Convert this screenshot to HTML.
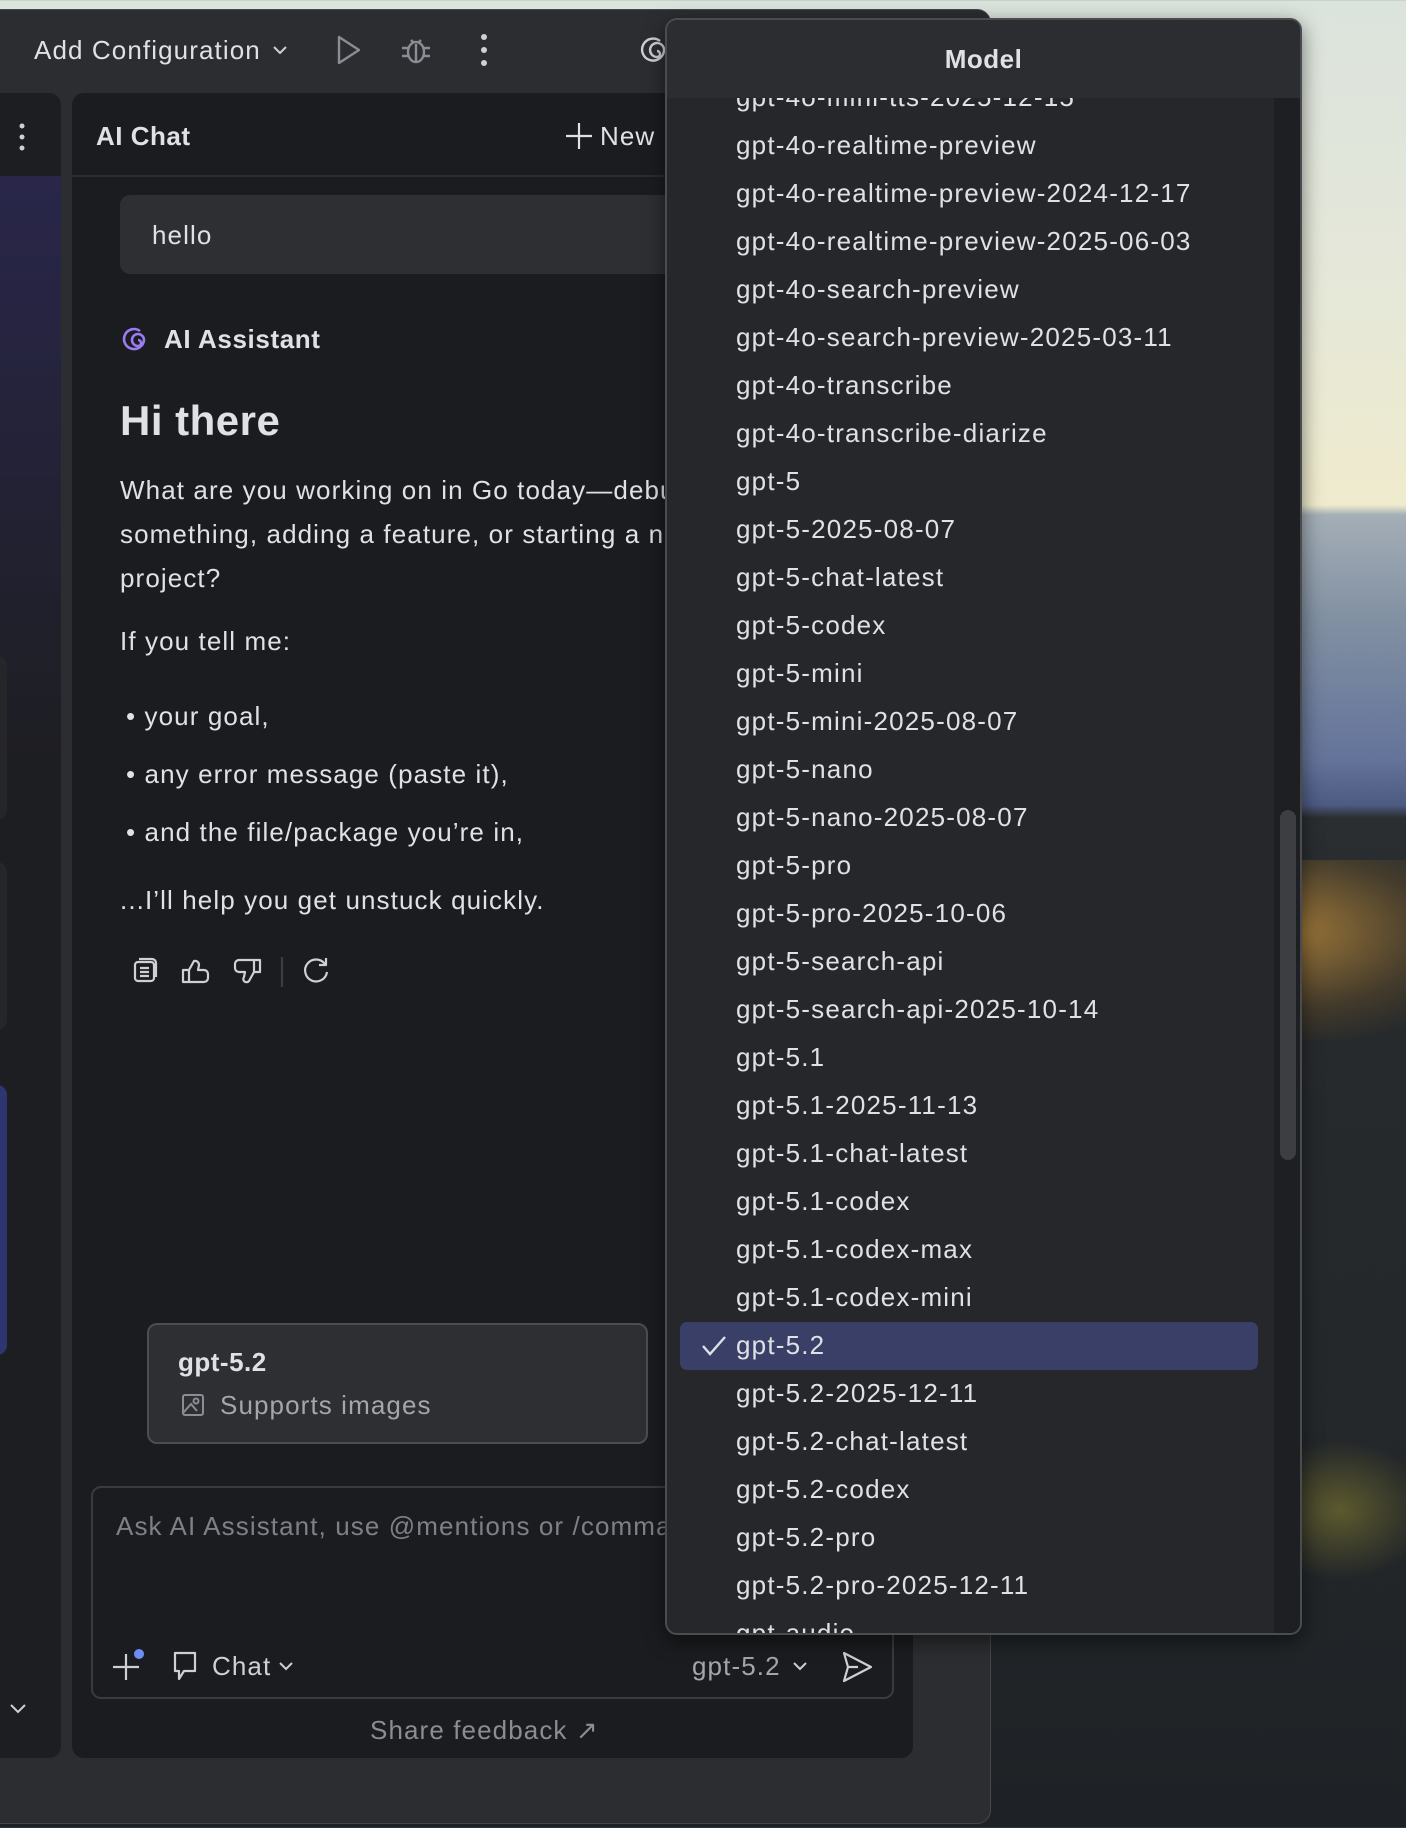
<!DOCTYPE html>
<html><head><meta charset="utf-8"><style>
*{margin:0;padding:0;box-sizing:border-box}
body{width:1406px;height:1828px;overflow:hidden;position:relative;font-family:"Liberation Sans",sans-serif;color:#dfe1e5;
background:linear-gradient(180deg,#dbe3dd 0px,#e6e8d8 300px,#efebcd 505px,#a4aeb6 515px,#8190a2 620px,#64739a 760px,#4d5a82 805px,#2a2e30 818px,#272a2c 1000px,#24282a 1400px,#1e2226 1828px)}
.abs{position:absolute}
.t{position:absolute;white-space:nowrap;font-size:26px;letter-spacing:1.1px;line-height:30px}
</style></head><body>
<div class="abs" style="left:1080px;top:860px;width:340px;height:180px;background:radial-gradient(ellipse at 60% 40%,rgba(190,140,60,.8),rgba(120,90,40,.35) 50%,rgba(0,0,0,0) 75%)"></div>
<div class="abs" style="left:1250px;top:1440px;width:180px;height:140px;background:radial-gradient(ellipse,rgba(150,140,50,.5),rgba(0,0,0,0) 70%)"></div>
<div class="abs" style="left:990px;top:1480px;width:200px;height:150px;background:radial-gradient(ellipse,rgba(120,110,50,.4),rgba(0,0,0,0) 70%)"></div>

<div class="abs" style="left:-20px;top:9px;width:1011px;height:1815px;background:#2b2d30;border-radius:14px;border:1px solid #45474b"></div>
<div class="t" style="left:34px;top:35px">Add Configuration</div>
<svg class="abs" style="left:272px;top:44px" width="16" height="12"><path d="M2 3l6 6 6-6" stroke="#ced0d6" stroke-width="2" fill="none"/></svg>
<svg class="abs" style="left:334px;top:34px" width="28" height="32"><path d="M5 3v26l20-13z" stroke="#8a8d93" stroke-width="2.4" fill="none" stroke-linejoin="round"/></svg>
<svg class="abs" style="left:400px;top:34px" width="32" height="32"><ellipse cx="16" cy="18" rx="8" ry="10" stroke="#8a8d93" stroke-width="2.4" fill="none"/><path d="M8 14H2M8 22H2M24 14h6M24 22h6M11 6l3 3M21 6l-3 3M16 10v18" stroke="#8a8d93" stroke-width="2.4"/></svg>
<svg class="abs" style="left:476px;top:32px" width="16" height="36"><circle cx="8" cy="5" r="3" fill="#ced0d6"/><circle cx="8" cy="18" r="3" fill="#ced0d6"/><circle cx="8" cy="31" r="3" fill="#ced0d6"/></svg>
<svg class="abs" style="left:640px;top:33px" width="30" height="32"><path d="M20 8a11 11 0 1 0 4 10 7 7 0 1 0-7 6 3 3 0 1 0 0-6" stroke="#ced0d6" stroke-width="2.4" fill="none"/></svg>

<div class="abs" style="left:-20px;top:93px;width:81px;height:1665px;background:#1d1e21;border-radius:12px;overflow:hidden">
 <div class="abs" style="left:0;top:83px;width:81px;height:600px;background:linear-gradient(180deg,#29264a,#1d1e21)"></div>
 <div class="abs" style="left:0;top:563px;width:27px;height:164px;background:#25262a;border-radius:10px"></div>
 <div class="abs" style="left:0;top:769px;width:27px;height:168px;background:#25262a;border-radius:10px"></div>
 <div class="abs" style="left:0;top:992px;width:27px;height:270px;background:#2e3570;border-radius:10px"></div>
</div>
<svg class="abs" style="left:17px;top:122px" width="10" height="30"><circle cx="5" cy="4" r="2.5" fill="#ced0d6"/><circle cx="5" cy="15" r="2.5" fill="#ced0d6"/><circle cx="5" cy="26" r="2.5" fill="#ced0d6"/></svg>
<svg class="abs" style="left:9px;top:1703px" width="18" height="12"><path d="M2 2l7 7 7-7" stroke="#ced0d6" stroke-width="2" fill="none"/></svg>

<div class="abs" style="left:72px;top:93px;width:841px;height:1665px;background:#1b1c1f;border-radius:12px"></div>
<div class="abs" style="left:72px;top:175px;width:841px;height:2px;background:#2a2c30"></div>
<div class="t" style="left:96px;top:121px;font-weight:bold;letter-spacing:0.5px">AI Chat</div>
<svg class="abs" style="left:565px;top:122px" width="28" height="28"><path d="M14 1v26M1 14h26" stroke="#dfe1e5" stroke-width="2.2"/></svg>
<div class="t" style="left:600px;top:121px">New</div>

<div class="abs" style="left:120px;top:195px;width:700px;height:79px;background:#2d2f33;border-radius:10px"></div>
<div class="t" style="left:152px;top:220px">hello</div>

<svg class="abs" style="left:122px;top:325px" width="28" height="30"><path d="M18 6a10 10 0 1 0 4 9 6 6 0 1 0-6 6 3 3 0 1 0 0-6" stroke="#9a7bf0" stroke-width="2.6" fill="none"/></svg>
<div class="t" style="left:164px;top:324px;font-weight:bold;letter-spacing:0.6px">AI Assistant</div>
<div class="t" style="left:120px;top:399px;font-size:42px;font-weight:bold;letter-spacing:0.5px;line-height:44px">Hi there</div>
<div class="t" style="left:120px;top:475px">What are you working on in Go today—debugging</div>
<div class="t" style="left:120px;top:519px">something, adding a feature, or starting a new</div>
<div class="t" style="left:120px;top:563px">project?</div>
<div class="t" style="left:120px;top:626px">If you tell me:</div>
<div class="t" style="left:126px;top:701px">• your goal,</div>
<div class="t" style="left:126px;top:759px">• any error message (paste it),</div>
<div class="t" style="left:126px;top:817px">• and the file/package you’re in,</div>
<div class="t" style="left:120px;top:885px">...I’ll help you get unstuck quickly.</div>

<svg class="abs" style="left:130px;top:955px" width="220" height="34" fill="none" stroke="#ced0d6" stroke-width="2.2" stroke-linejoin="round">
 <rect x="5" y="7" width="19" height="19" rx="3"/><path d="M9 4h13a4 4 0 0 1 4 4v14M10 13h9M10 17h9M10 21h9"/>
 <path d="M59 27V15M59 15h-6v12h6h15a4 4 0 0 0 4-4v-4a4 4 0 0 0-4-4h-6l1-5a4 4 0 0 0-5-4l-5 9"/>
 <path d="M124 5v12M124 5h-15a4 4 0 0 0-4 4v4a4 4 0 0 0 4 4h6l-1 5a3 3 0 0 0 5 4l5-9M124 5h6v12h-6"/>
 <path d="M152 2v30" stroke="#3a3c40"/>
 <path d="M195 9a11 11 0 1 0 2 8M196 3v7h-7"/>
</svg>

<div class="abs" style="left:147px;top:1323px;width:501px;height:121px;background:#2d2f33;border:2px solid #4b4d52;border-radius:10px"></div>
<div class="t" style="left:178px;top:1347px;font-weight:bold;letter-spacing:0.5px">gpt-5.2</div>
<svg class="abs" style="left:181px;top:1393px" width="24" height="24" fill="none" stroke="#8a8d93" stroke-width="2"><rect x="2" y="2" width="20" height="20" rx="2"/><circle cx="15" cy="8" r="2.5"/><path d="M2 20l8-9 6 7"/></svg>
<div class="t" style="left:220px;top:1390px;color:#a3a6ab">Supports images</div>

<div class="abs" style="left:91px;top:1486px;width:803px;height:213px;border:2px solid #393b40;border-radius:10px;background:#1b1c1f"></div>
<div class="t" style="left:116px;top:1511px;color:#7d8087">Ask AI Assistant, use @mentions or /commands</div>
<svg class="abs" style="left:112px;top:1648px" width="36" height="36"><path d="M14 6v26M1 19h26" stroke="#ced0d6" stroke-width="2.2"/><circle cx="27" cy="6" r="5" fill="#6f8cf5"/></svg>
<svg class="abs" style="left:172px;top:1650px" width="26" height="34" fill="none" stroke="#ced0d6" stroke-width="2.2" stroke-linejoin="round"><path d="M3 3h20v18H12l-5 8v-8H3z"/></svg>
<div class="t" style="left:212px;top:1651px;color:#ced0d6">Chat</div>
<svg class="abs" style="left:278px;top:1660px" width="16" height="12"><path d="M2 3l6 6 6-6" stroke="#ced0d6" stroke-width="2" fill="none"/></svg>
<div class="t" style="left:692px;top:1651px;color:#a3a6ab">gpt-5.2</div>
<svg class="abs" style="left:792px;top:1660px" width="16" height="12"><path d="M2 3l6 6 6-6" stroke="#ced0d6" stroke-width="2" fill="none"/></svg>
<svg class="abs" style="left:840px;top:1650px" width="34" height="34" fill="none" stroke="#ced0d6" stroke-width="2.2" stroke-linejoin="round"><path d="M4 3l27 14L4 31l4-14z M8 17h10"/></svg>
<div class="t" style="left:370px;top:1715px;color:#8a8d93">Share feedback ↗</div>

<div class="abs" style="left:665px;top:18px;width:637px;height:1617px;background:#26272b;border:2px solid #4a4c50;border-radius:12px;overflow:hidden;box-shadow:0 6px 20px rgba(0,0,0,.5)">
 <div class="abs" style="left:0;top:0;width:100%;height:78px;background:#2b2d30"></div>
 <div class="t" style="left:0;width:633px;text-align:center;top:24px;font-weight:bold;letter-spacing:0.5px">Model</div>
 <div class="abs" style="left:607px;top:78px;width:30px;height:1540px;background:#1e1f22"></div>
 <div class="abs" style="left:613px;top:790px;width:16px;height:350px;background:#3d3e42;border-radius:8px"></div>
 <div class="abs" style="left:0;top:78px;width:605px;height:1537px;overflow:hidden">
  <div class="abs" style="left:13px;top:1224px;width:578px;height:48px;background:#393f66;border-radius:7px"></div>
  <svg class="abs" style="left:34px;top:1237px" width="26" height="22"><path d="M2 11l7 8L24 2" stroke="#dfe1e5" stroke-width="2.4" fill="none"/></svg>
  <div class="abs" style="left:69px;top:-25px;font-size:26px;letter-spacing:1.2px;line-height:48px;white-space:nowrap">
gpt-4o-mini-tts-2025-12-15<br>gpt-4o-realtime-preview<br>gpt-4o-realtime-preview-2024-12-17<br>gpt-4o-realtime-preview-2025-06-03<br>gpt-4o-search-preview<br>gpt-4o-search-preview-2025-03-11<br>gpt-4o-transcribe<br>gpt-4o-transcribe-diarize<br>gpt-5<br>gpt-5-2025-08-07<br>gpt-5-chat-latest<br>gpt-5-codex<br>gpt-5-mini<br>gpt-5-mini-2025-08-07<br>gpt-5-nano<br>gpt-5-nano-2025-08-07<br>gpt-5-pro<br>gpt-5-pro-2025-10-06<br>gpt-5-search-api<br>gpt-5-search-api-2025-10-14<br>gpt-5.1<br>gpt-5.1-2025-11-13<br>gpt-5.1-chat-latest<br>gpt-5.1-codex<br>gpt-5.1-codex-max<br>gpt-5.1-codex-mini<br>gpt-5.2<br>gpt-5.2-2025-12-11<br>gpt-5.2-chat-latest<br>gpt-5.2-codex<br>gpt-5.2-pro<br>gpt-5.2-pro-2025-12-11<br>gpt-audio
  </div>
 </div>
</div>
</body></html>
